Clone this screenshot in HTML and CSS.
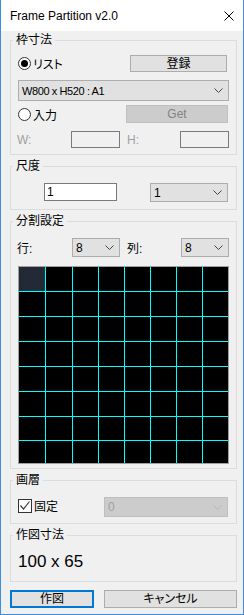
FILE: index.html
```html
<!DOCTYPE html>
<html lang="ja">
<head>
  <meta charset="UTF-8">
  <title>Frame Partition v2.0</title>
  <link rel="stylesheet" href="styles.css">
</head>
<body>

<div class="window">
  <div class="titlebar">
    <span class="title">Frame Partition v2.0</span>
    <svg class="close" width="10" height="10" viewBox="0 0 10 10">
      <path d="M0.5 0.5 L9.5 9.5 M9.5 0.5 L0.5 9.5" stroke="#000" stroke-width="1" fill="none"/>
    </svg>
  </div>

  <div class="content">
    <fieldset class="group frame-size">
      <legend>枠寸法</legend>
      <div class="row row-list">
        <label class="opt"><span class="radio on"></span>リスト</label>
        <button class="btn btn-register">登録</button>
      </div>
      <div class="combo combo-size">
        <span>W800 x H520 : A1</span>
        <svg class="chev" width="9" height="5" viewBox="0 0 9 5"><polyline points="0.5,0.5 4.5,4.5 8.5,0.5" fill="none" stroke="#444"/></svg>
      </div>
      <div class="row row-input">
        <label class="opt"><span class="radio"></span>入力</label>
        <button class="btn btn-get" disabled>Get</button>
      </div>
      <div class="row row-wh">
        <span class="lbl dim lbl-w">W:</span>
        <span class="textbox off"></span>
        <span class="lbl dim lbl-h">H:</span>
        <span class="textbox off"></span>
      </div>
    </fieldset>

    <fieldset class="group scale">
      <legend>尺度</legend>
      <div class="row">
        <span class="textbox scale-input">1</span>
        <div class="combo scale-combo">
          <span>1</span>
          <svg class="chev" width="9" height="5" viewBox="0 0 9 5"><polyline points="0.5,0.5 4.5,4.5 8.5,0.5" fill="none" stroke="#444"/></svg>
        </div>
      </div>
    </fieldset>

    <fieldset class="group split">
      <legend>分割設定</legend>
      <div class="row">
        <span class="lbl lbl-row">行:</span>
        <div class="combo small-combo">
          <span>8</span>
          <svg class="chev" width="9" height="5" viewBox="0 0 9 5"><polyline points="0.5,0.5 4.5,4.5 8.5,0.5" fill="none" stroke="#444"/></svg>
        </div>
        <span class="lbl lbl-col">列:</span>
        <div class="combo small-combo">
          <span>8</span>
          <svg class="chev" width="9" height="5" viewBox="0 0 9 5"><polyline points="0.5,0.5 4.5,4.5 8.5,0.5" fill="none" stroke="#444"/></svg>
        </div>
      </div>
      <div class="grid" id="grid"></div>
    </fieldset>

    <fieldset class="group layer">
      <legend>画層</legend>
      <div class="row">
        <label class="opt">
          <svg class="check" width="14" height="14" viewBox="0 0 14 14">
            <rect x="0.5" y="0.5" width="13" height="13" fill="#fff" stroke="#333"/>
            <polyline points="2.5,6.5 5.5,10 11.5,2.5" fill="none" stroke="#3c3c3c" stroke-width="1.2"/>
          </svg>固定
        </label>
        <div class="combo combo-off layer-combo">
          <span>0</span>
          <svg class="chev" width="9" height="5" viewBox="0 0 9 5"><polyline points="0.5,0.5 4.5,4.5 8.5,0.5" fill="none" stroke="#b4b4b4"/></svg>
        </div>
      </div>
    </fieldset>

    <fieldset class="group result">
      <legend>作図寸法</legend>
      <div class="dims">100 x 65</div>
    </fieldset>

    <div class="actions">
      <button class="btn btn-ok">作図</button>
      <button class="btn btn-cancel">キャンセル</button>
    </div>
  </div>
</div>

<script>
// 8 x 8 partition preview, first cell is the selected one
const grid = document.getElementById('grid');
for (let i = 0; i < 64; i++) {
  const cell = document.createElement('div');
  cell.className = i === 0 ? 'cell sel' : 'cell';
  grid.appendChild(cell);
}
</script>

</body>
</html>
```

FILE: styles.css
```css
* {
  box-sizing: border-box;
}

body {
  margin: 0;
  font-family: "Liberation Sans", "Noto Sans CJK JP", sans-serif;
  font-size: 12px;
  font-feature-settings: "palt";
  color: #000;
}

.window {
  width: 244px;
  height: 615px;
  border: 1px solid #3a8ee6;
  border-top: none;
  background: #f0f0f0;
}

.titlebar {
  height: 31px;
  background: #fff;
  display: flex;
  align-items: center;
  justify-content: space-between;
  padding: 0 9px;
}

.title {
  font-size: 12px;
}

.content {
  padding: 2px 6px 0 9px;
}

.group {
  margin: 4px 0 0;
  padding: 0;
  border: 1px solid #dcdcdc;
  min-width: 0;
}

.group:first-child {
  margin-top: 0;
}

.group legend {
  margin-left: 2px;
  padding: 0 3px;
  line-height: 15px;
  font-size: 12px;
}

.row {
  display: flex;
  align-items: center;
}

.opt {
  display: flex;
  align-items: center;
  margin-left: 7px;
}

.radio {
  width: 13px;
  height: 13px;
  border: 1px solid #333;
  border-radius: 50%;
  background: #fff;
  margin-right: 2px;
  display: flex;
  align-items: center;
  justify-content: center;
}

.radio.on::after {
  content: "";
  width: 7px;
  height: 7px;
  border-radius: 50%;
  background: #000;
}

.check {
  margin-right: 2px;
}

.btn {
  font-family: inherit;
  font-size: 12px;
  font-feature-settings: "palt";
  color: #000;
  background: #e1e1e1;
  border: 1px solid #adadad;
  padding: 0;
  margin: 0;
  line-height: 1;
}

.btn:disabled {
  background: #cccccc;
  border-color: #bfbfbf;
  color: #838383;
}

.combo {
  display: flex;
  align-items: center;
  justify-content: space-between;
  background: #e1e1e1;
  border: 1px solid #adadad;
  padding: 0 5px 0 3px;
}

.combo-off {
  background: #cccccc;
  border-color: #bfbfbf;
  color: #a0a0a0;
}

.textbox {
  display: flex;
  align-items: center;
  border: 1px solid #7a7a7a;
  background: #fff;
  padding-left: 2px;
}

.textbox.off {
  background: #f0f0f0;
  width: 49px;
  height: 17px;
}

.lbl.dim {
  color: #a0a0a0;
}

/* 枠寸法 */
.row-list {
  margin-top: 7px;
  height: 17px;
}

.btn-register {
  width: 97px;
  height: 17px;
  margin-left: auto;
  margin-right: 9px;
}

.combo-size {
  margin: 8px 7px 0;
  height: 21px;
  letter-spacing: -0.4px;
  font-size: 11px;
}

.row-input {
  margin-top: 4px;
  height: 18px;
}

.btn-get {
  width: 102px;
  height: 18px;
  margin-left: auto;
  margin-right: 8px;
}

.row-wh {
  margin: 8px 0 6px;
  height: 17px;
}

.lbl-w {
  margin-left: 6px;
  width: 54px;
}

.lbl-h {
  margin-left: 7px;
  width: 53px;
}

/* 尺度 */
.scale .row {
  margin: 9px 0 7px;
  height: 19px;
  align-items: flex-start;
}

.scale-input {
  margin-left: 33px;
  width: 73px;
  height: 18px;
}

.scale-combo {
  margin-left: 33px;
  width: 78px;
  height: 19px;
}

/* 分割設定 */
.split .row {
  margin-top: 9px;
  height: 19px;
}

.lbl-row {
  margin-left: 6px;
  width: 55px;
}

.lbl-col {
  margin-left: 7px;
  width: 54px;
}

.small-combo {
  width: 48px;
  height: 19px;
}

.grid {
  margin: 9px 7px 4px;
  display: grid;
  grid-template-columns: 26px 26px repeat(6, 25px);
  grid-template-rows: repeat(6, 24px) 23px 22px;
  gap: 1px;
  background: #00ffff;
  border: 1px solid #a0a0a0;
}

.cell {
  background: #000;
}

.cell.sel {
  background: #232a35;
}

/* 画層 */
.layer .row {
  margin: 9px 0 6px;
  height: 20px;
  align-items: flex-start;
}

.layer-combo {
  width: 124px;
  height: 20px;
  margin-left: auto;
  margin-right: 8px;
}

/* 作図寸法 */
.dims {
  height: 38px;
  display: flex;
  align-items: center;
  padding-left: 7px;
  font-size: 17px;
}

.actions {
  display: flex;
  gap: 10px;
  margin-top: 8px;
}

.btn-ok {
  width: 84px;
  height: 18px;
  border: 2px solid #0078d7;
}

.btn-cancel {
  width: 133px;
  height: 18px;
}
```
